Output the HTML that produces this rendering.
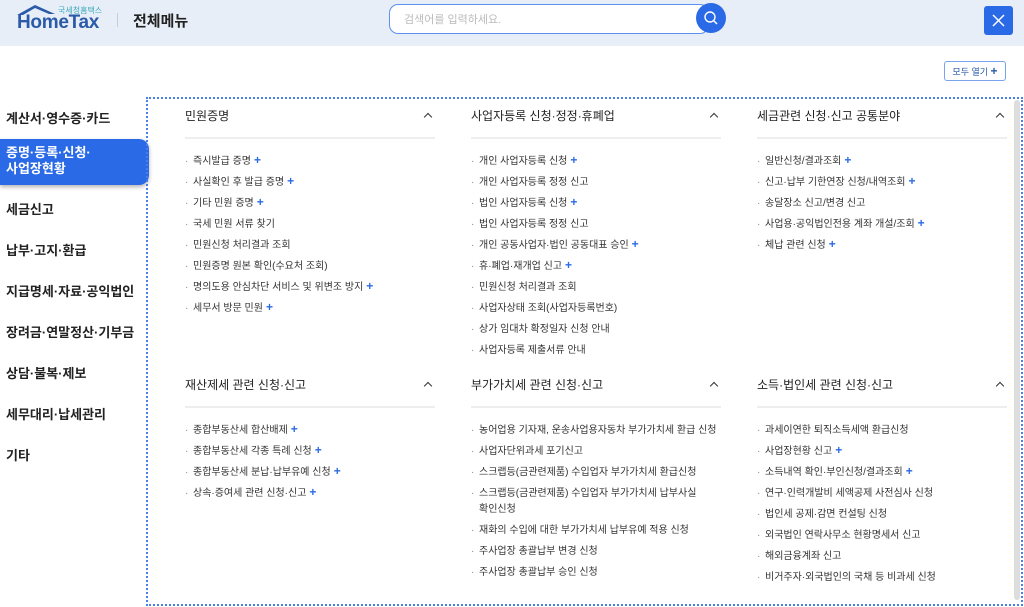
<!DOCTYPE html>
<html><head><meta charset="utf-8"><style>
*{margin:0;padding:0;box-sizing:border-box}
body{width:1024px;height:607px;overflow:hidden;background:#fff;font-family:"Liberation Sans","Noto Sans CJK KR",sans-serif;color:#222;position:relative}
.hdr{position:absolute;left:0;top:0;width:1024px;height:46px;background:#e8eef8}
.abs{position:absolute;white-space:nowrap}
.side{position:absolute;left:6px;font-size:13px;font-weight:bold;color:#222}
.act{position:absolute;left:0;top:139px;width:149px;height:46px;background:#2a6ae6;border-radius:0 10px 10px 0;color:#fff;font-weight:bold;font-size:13px;line-height:16px;padding:6px 6px;box-shadow:0 2px 4px rgba(0,0,0,.3)}
.frame{position:absolute;left:146px;top:97px;width:877px;height:509px;border:2px dotted #4a7ee8}
.col{position:absolute;width:250px}
.col h3{font-size:12px;font-weight:normal;color:#222;height:31px;line-height:16px;border-bottom:2px solid #eee;position:relative}
.col h3:after{content:"";position:absolute;right:4px;top:6px;width:5px;height:5px;border-left:1.3px solid #333;border-top:1.3px solid #333;transform:rotate(45deg)}
.col ul{list-style:none;margin-top:12px}
.col li{font-size:10px;line-height:21px;height:21px;padding-left:8px;position:relative;color:#333;white-space:nowrap}
.col li.two{height:37px;line-height:16px;padding-top:3px}
.col li:before{content:"·";position:absolute;left:0;color:#888}
.p{color:#2a6ae6;font-weight:bold;font-size:12px;margin-left:3px;line-height:10px}
</style></head><body>
<div class="hdr"></div>
<svg class="abs" style="left:15px;top:3px" width="50" height="14" viewBox="0 0 50 14"><path d="M2 12 L20 2 L40 11 L34 11 L20 5 L8 12 Z" fill="#2a5aa8"/></svg>
<div class="abs" style="left:58px;top:5px;font-size:8px;color:#3aaabb">국세청홈택스</div>
<div class="abs" style="left:17px;top:12px;font-size:19px;font-weight:bold;color:#2a5aa8;letter-spacing:-0.3px">HomeTax</div>
<div class="abs" style="left:117px;top:13px;width:1px;height:14px;background:#ccc"></div>
<div class="abs" style="left:133px;top:10px;font-size:15px;font-weight:bold;color:#222">전체메뉴</div>
<div class="abs" style="left:389px;top:4px;width:320px;height:30px;border:1.5px solid #5b8ff0;border-radius:9px;background:#fff"></div>
<div class="abs" style="left:404px;top:11px;font-size:11px;color:#bbb">검색어를 입력하세요.</div>
<div class="abs" style="left:696px;top:3px;width:30px;height:30px;border-radius:50%;background:#2a6ae6"></div>
<svg class="abs" style="left:702px;top:9px" width="18" height="18"><circle cx="8" cy="8" r="5" stroke="#fff" stroke-width="1.4" fill="none"/><path d="M12 12 L15 15" stroke="#fff" stroke-width="1.5"/></svg>
<div class="abs" style="left:984px;top:6px;width:29px;height:29px;border-radius:3px;background:#2a6ae6"></div>
<svg class="abs" style="left:984px;top:6px" width="29" height="29"><path d="M9 9 L20 20 M20 9 L9 20" stroke="#fff" stroke-width="1.5"/></svg>
<div class="abs" style="left:944px;top:61px;width:62px;height:20px;border:1px solid #7aa3ee;border-radius:3px;font-size:9px;color:#2a5aa8;text-align:center;line-height:18px">모두 열기 <b style="font-size:12px">+</b></div>

<div class="side" style="top:108px">계산서·영수증·카드</div>
<div class="act">증명·등록·신청·<br>사업장현황</div>
<div class="side" style="top:199px">세금신고</div>
<div class="side" style="top:240px">납부·고지·환급</div>
<div class="side" style="top:281px">지급명세·자료·공익법인</div>
<div class="side" style="top:322px">장려금·연말정산·기부금</div>
<div class="side" style="top:363px">상담·불복·제보</div>
<div class="side" style="top:404px">세무대리·납세관리</div>
<div class="side" style="top:445px">기타</div>

<div class="frame"></div>
<div class="abs" style="left:1014px;top:100px;width:6px;height:500px;background:#ddd;border-radius:3px"></div>

<div class="col" style="left:185px;top:108px"><h3>민원증명</h3><ul>
<li>즉시발급 증명<span class="p">+</span></li><li>사실확인 후 발급 증명<span class="p">+</span></li><li>기타 민원 증명<span class="p">+</span></li><li>국세 민원 서류 찾기</li><li>민원신청 처리결과 조회</li><li>민원증명 원본 확인(수요처 조회)</li><li>명의도용 안심차단 서비스 및 위변조 방지<span class="p">+</span></li><li>세무서 방문 민원<span class="p">+</span></li></ul></div>
<div class="col" style="left:471px;top:108px"><h3>사업자등록 신청·정정·휴폐업</h3><ul>
<li>개인 사업자등록 신청<span class="p">+</span></li><li>개인 사업자등록 정정 신고</li><li>법인 사업자등록 신청<span class="p">+</span></li><li>법인 사업자등록 정정 신고</li><li>개인 공동사업자·법인 공동대표 승인<span class="p">+</span></li><li>휴·폐업·재개업 신고<span class="p">+</span></li><li>민원신청 처리결과 조회</li><li>사업자상태 조회(사업자등록번호)</li><li>상가 임대차 확정일자 신청 안내</li><li>사업자등록 제출서류 안내</li></ul></div>
<div class="col" style="left:757px;top:108px"><h3>세금관련 신청·신고 공통분야</h3><ul>
<li>일반신청/결과조회<span class="p">+</span></li><li>신고·납부 기한연장 신청/내역조회<span class="p">+</span></li><li>송달장소 신고/변경 신고</li><li>사업용·공익법인전용 계좌 개설/조회<span class="p">+</span></li><li>체납 관련 신청<span class="p">+</span></li></ul></div>

<div class="col" style="left:185px;top:377px"><h3>재산제세 관련 신청·신고</h3><ul>
<li>종합부동산세 합산배제<span class="p">+</span></li><li>종합부동산세 각종 특례 신청<span class="p">+</span></li><li>종합부동산세 분납·납부유예 신청<span class="p">+</span></li><li>상속·증여세 관련 신청·신고<span class="p">+</span></li></ul></div>
<div class="col" style="left:471px;top:377px"><h3>부가가치세 관련 신청·신고</h3><ul>
<li>농어업용 기자재, 운송사업용자동차 부가가치세 환급 신청</li><li>사업자단위과세 포기신고</li><li>스크랩등(금관련제품) 수입업자 부가가치세 환급신청</li><li class="two">스크랩등(금관련제품) 수입업자 부가가치세 납부사실<br>확인신청</li><li>재화의 수입에 대한 부가가치세 납부유예 적용 신청</li><li>주사업장 총괄납부 변경 신청</li><li>주사업장 총괄납부 승인 신청</li></ul></div>
<div class="col" style="left:757px;top:377px"><h3>소득·법인세 관련 신청·신고</h3><ul>
<li>과세이연한 퇴직소득세액 환급신청</li><li>사업장현황 신고<span class="p">+</span></li><li>소득내역 확인·부인신청/결과조회<span class="p">+</span></li><li>연구·인력개발비 세액공제 사전심사 신청</li><li>법인세 공제·감면 컨설팅 신청</li><li>외국법인 연락사무소 현황명세서 신고</li><li>해외금융계좌 신고</li><li>비거주자·외국법인의 국채 등 비과세 신청</li></ul></div>
</body></html>
